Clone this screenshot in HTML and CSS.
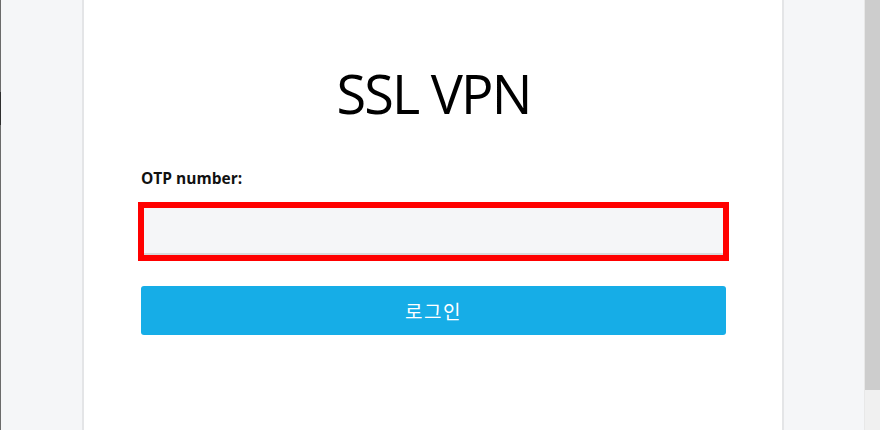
FILE: index.html
```html
<!DOCTYPE html>
<html lang="ko">
<head>
<meta charset="utf-8">
<title>SSL VPN</title>
<link rel="stylesheet" href="styles.css">
</head>
<body>
<div class="page">
  <div class="edge"><div class="edge-dark"></div></div>
  <div class="side side-left"></div>
  <main class="card">
    <h1 class="title">SSL VPN</h1>
    <form class="form">
      <label class="label" for="otp">OTP number:</label>
      <input class="otp-input" id="otp" type="text">
      <button class="login-btn" type="button">로그인</button>
    </form>
  </main>
  <div class="side side-right"></div>
  <div class="scrollbar"><div class="thumb"></div></div>
</div>
</body>
</html>
```

FILE: styles.css
```css
html, body {
  margin: 0;
  padding: 0;
  height: 100%;
  overflow: hidden;
}

body {
  font-family: "Open Sans", "Noto Sans", sans-serif;
  background: #f5f6f8;
}

.page {
  display: flex;
  height: 430px;
  width: 880px;
}

.edge {
  width: 1px;
  flex: none;
  background: #6b6b6b;
  padding-top: 92px;
  box-sizing: border-box;
}

.edge-dark {
  height: 33px;
  background: #2e2e2e;
}

.side {
  flex: none;
  background: #f5f6f8;
}

.side-left {
  width: 81px;
}

.side-right {
  width: 80px;
}

.card {
  flex: none;
  width: 702px;
  box-sizing: border-box;
  background: #ffffff;
  border-left: 2px solid #e4e5e7;
  border-right: 2px solid #e4e5e7;
  padding: 66px 56px 0 57px;
}

.title {
  margin: 0;
  font-family: "Open Sans", sans-serif;
  font-weight: 400;
  font-size: 54px;
  line-height: 54px;
  letter-spacing: -1.8px;
  text-align: center;
  color: #000000;
}

.form {
  display: flex;
  flex-direction: column;
  margin-top: 48px;
}

.label {
  font-family: "Open Sans", sans-serif;
  font-weight: 700;
  font-size: 15.5px;
  line-height: 20px;
  color: #111111;
}

.otp-input {
  margin-top: 17px;
  height: 53px;
  box-sizing: border-box;
  border: 3px solid #ff0000;
  outline: 3px solid #ff0000;
  background: #f5f6f8;
  box-shadow: inset 0 -2px 0 #d9dadc;
  padding: 0 10px;
  font-size: 16px;
}

.login-btn {
  margin-top: 28px;
  height: 49px;
  border: none;
  border-radius: 3px;
  background: #16ade7;
  color: #ffffff;
  font-family: "Noto Sans CJK KR", "Noto Sans", sans-serif;
  font-size: 19px;
  font-weight: 400;
  letter-spacing: 1.5px;
  cursor: pointer;
}

.scrollbar {
  flex: none;
  width: 16px;
  background: #f0f0f0;
  border-left: 1px solid #e8e8e8;
  box-sizing: border-box;
}

.thumb {
  height: 390px;
  background: #cdcdcd;
}
```
